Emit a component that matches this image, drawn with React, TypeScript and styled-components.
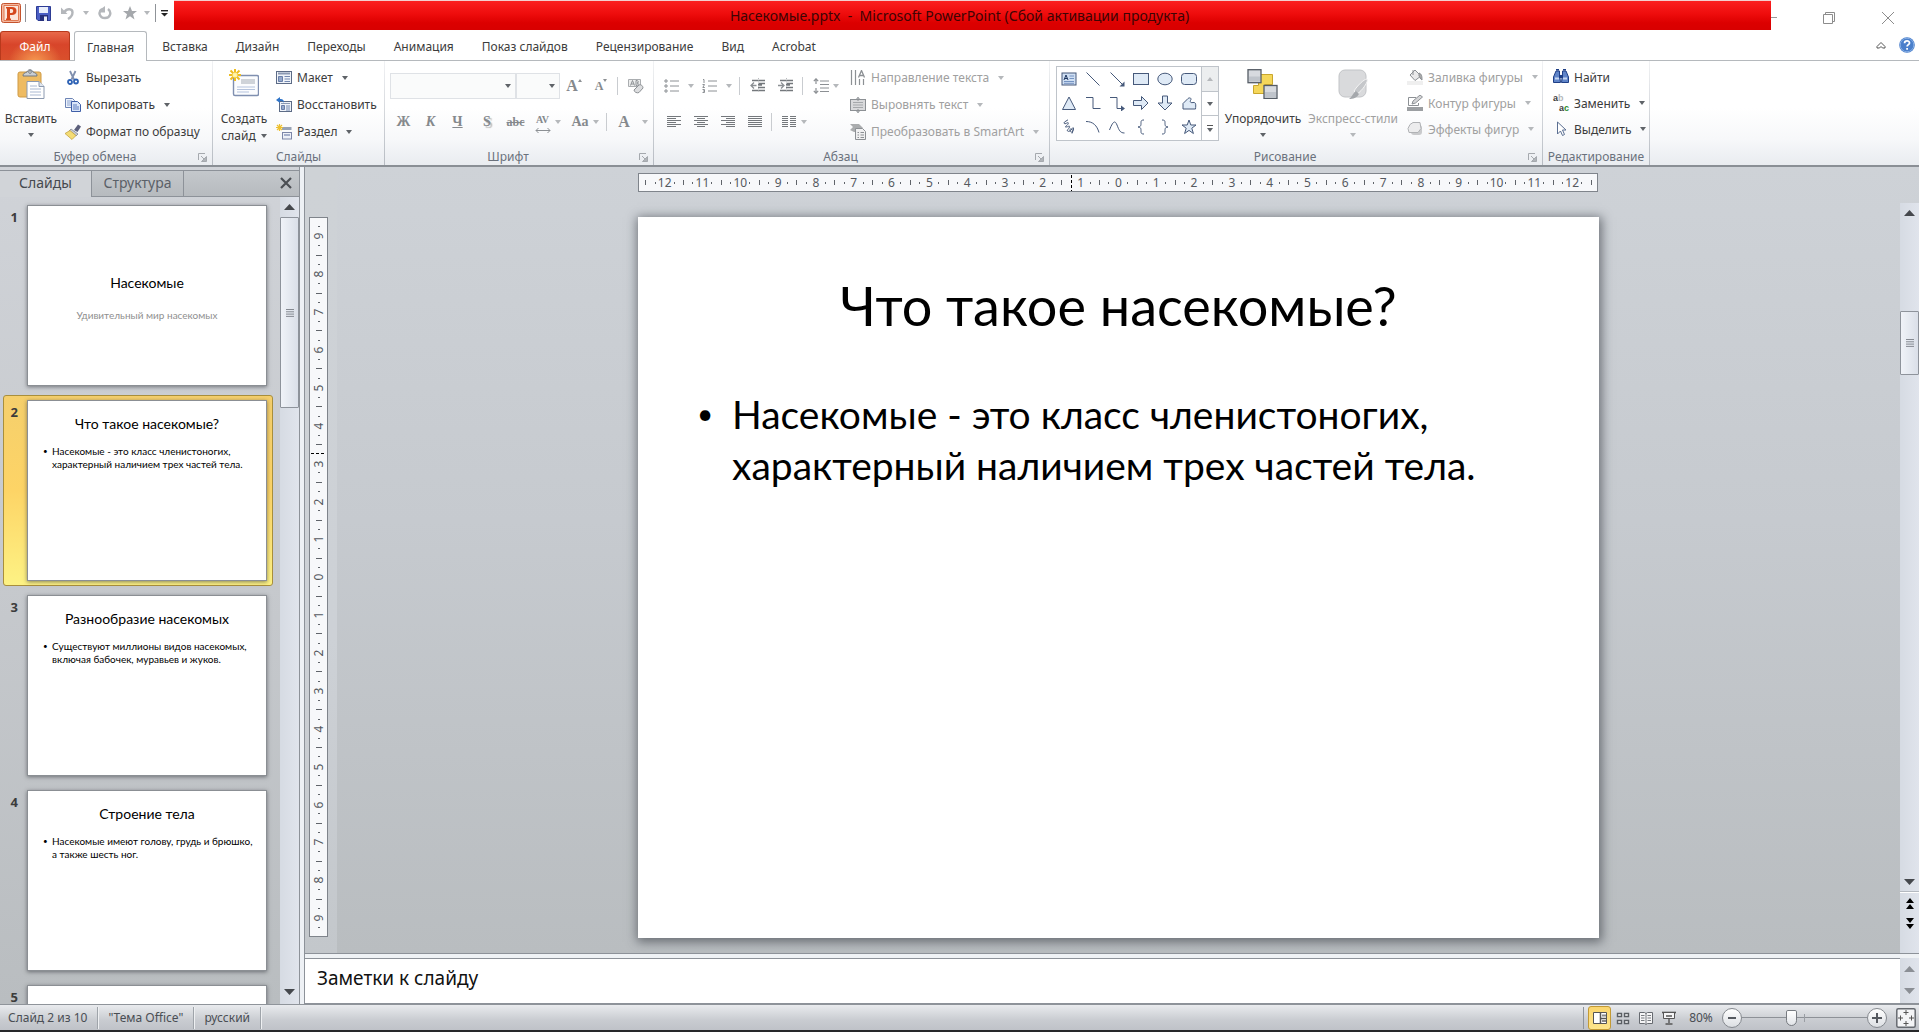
import React from 'react';
import styled, { createGlobalStyle, css } from 'styled-components';

const ui = `"Noto Sans", "Open Sans", sans-serif`;
const slideFont = `Lato, "Open Sans", sans-serif`;
const ink = '#3c3c3c';
const dim = '#a0a0a0';
const rule = '#8d9299';

const GlobalStyle = createGlobalStyle`
  *, *::before, *::after { box-sizing: border-box; }
  body { margin: 0; font-family: ${ui}; font-size: 12px; color: ${ink}; background: #fff; }
  button, select, textarea, input { font: inherit; color: inherit; margin: 0; }
  button { border: 0; padding: 0; background: none; white-space: nowrap; }
  ul, ol { list-style: none; margin: 0; padding: 0; }
  h1, h2, p { margin: 0; font-weight: 400; }
  svg { display: block; flex: none; }
`;

const Shell = styled.div`
  display: flex;
  flex-direction: column;
  height: 100vh;
  overflow: hidden;
  background: #e9ecef;
`;

/* ---------- title bar ---------- */
const TitleBar = styled.header`
  display: flex;
  align-items: stretch;
  height: 30px;
  background: #fff;
  flex: none;
`;
const QuickAccess = styled.div`
  display: flex;
  align-items: center;
  width: 174px;
  padding: 0 4px 4px 1px;
  flex: none;
`;
const QuickButton = styled.button<{ $w: number }>`
  display: flex;
  align-items: center;
  justify-content: center;
  width: ${p => p.$w}px;
  height: 22px;
`;
const Bar = styled.i<{ $h?: number; $m?: number; $c?: string }>`
  display: block;
  flex: none;
  width: 1px;
  height: ${p => p.$h ?? 18}px;
  margin: 0 ${p => p.$m ?? 3}px;
  background: ${p => p.$c ?? '#c9ccd0'};
`;
const RedTitle = styled.h1`
  flex: 1;
  display: flex;
  justify-content: center;
  align-items: center;
  padding-right: 26px;
  border-top: 1px solid #f3cfcf;
  background: linear-gradient(#fb2020, #ee0c0c 45%, #dc0000 75%, #d80000);
  color: #3c0404;
  font-size: 14px;
  line-height: 20px;
  white-space: pre;
`;
const WindowButtons = styled.div`
  display: flex;
  width: 148px;
  flex: none;
  padding-top: 6px;
`;
const WindowButton = styled.button<{ $w: number }>`
  width: ${p => p.$w}px;
  height: 24px;
  display: flex;
  align-items: center;
  justify-content: center;
`;

/* ---------- ribbon tabs ---------- */
const TabRow = styled.nav`
  display: flex;
  align-items: stretch;
  height: 31px;
  flex: none;
  background: #fff;
  border-bottom: 1px solid #b5b9bd;
`;
const FileTab = styled.button`
  width: 70px;
  margin: 1px 4px 0 0;
  border: 1px solid #b8391c;
  border-bottom: 0;
  border-radius: 3px 3px 0 0;
  color: #fff;
  background: radial-gradient(ellipse at 50% 110%, #f79b52 0, rgba(247, 155, 82, 0) 55%), linear-gradient(#e8694a, #d8452a 45%, #d9502c);
`;
const RibbonTab = styled.button<{ $active?: boolean }>`
  padding: 2px 14px 0;
  margin-top: 1px;
  ${p => p.$active && css`
    padding: 1px 12px 0;
    margin-right: 1px;
    margin-bottom: -1px;
    background: #fff;
    border: 1px solid #b5b9bd;
    border-bottom: 0;
    border-radius: 3px 3px 0 0;
  `}
`;
const TabTools = styled.div`
  display: flex;
  align-items: center;
  gap: 13px;
  margin-left: auto;
  padding-right: 4px;
`;

/* ---------- ribbon ---------- */
const Ribbon = styled.section`
  display: flex;
  flex: none;
  height: 106px;
  background: linear-gradient(#fff 45%, #f7f8fa 75%, #e9ecf0);
  border-bottom: 2px solid #8a8f95;
`;
const Group = styled.section<{ $w: number }>`
  width: ${p => p.$w}px;
  flex: none;
  display: flex;
  flex-direction: column;
  padding-top: 3px;
  border-right: 1px solid;
  border-image: linear-gradient(#f2f3f5, #b6bbc2) 1;
`;
const GroupBody = styled.div<{ $pad: number }>`
  display: flex;
  height: 81px;
  padding-left: ${p => p.$pad}px;
`;
const GroupFooter = styled.div`
  display: flex;
  align-items: center;
  flex: 1;
  padding-top: 4px;
  color: #6a717c;
`;
const GroupName = styled.h2`
  flex: 1;
  text-align: center;
  font-size: 12px;
  line-height: 16px;
`;
const LauncherButton = styled.button`
  margin: 0 5px 0 8px;
`;
const BigButton = styled.button<{ $w: number; $off?: boolean }>`
  width: ${p => p.$w}px;
  display: flex;
  flex-direction: column;
  align-items: center;
  padding-top: 5px;
  line-height: 17px;
  color: ${p => (p.$off ? dim : ink)};
`;
const BigIcon = styled.span`
  height: 41px;
`;
const BigLabel = styled.span`
  display: flex;
  align-items: center;
  gap: 5px;
  min-height: 15px;
`;
const Stack = styled.div<{ $ml?: number }>`
  display: flex;
  flex-direction: column;
  margin-left: ${p => p.$ml ?? 0}px;
`;
const RowButton = styled.button<{ $off?: boolean; $tight?: boolean }>`
  display: flex;
  align-items: center;
  height: ${p => (p.$tight ? 26 : 27)}px;
  gap: 5px;
  color: ${p => (p.$off ? dim : ink)};
`;
const CaretSlot = styled.span`
  margin-left: 4px;
`;
const ToolRows = styled.div`
  display: flex;
  flex-direction: column;
  padding-top: 9px;
  gap: 10px;
`;
const ToolRow = styled.div`
  display: flex;
  align-items: center;
  height: 26px;
`;
const ToolButton = styled.button<{ $w: number; $gap?: number }>`
  width: ${p => p.$w}px;
  height: 24px;
  display: flex;
  align-items: center;
  justify-content: center;
  gap: ${p => p.$gap ?? 4}px;
  color: #85898d;
`;
const Letter = styled.span<{ $size?: number; $italic?: boolean; $under?: boolean; $strike?: boolean; $shadow?: boolean }>`
  font-family: "Liberation Serif", serif;
  font-weight: 700;
  font-size: ${p => p.$size ?? 14}px;
  line-height: 16px;
  font-style: ${p => (p.$italic ? 'italic' : 'normal')};
  text-decoration: ${p => (p.$under ? 'underline' : p.$strike ? 'line-through' : 'none')};
  text-shadow: ${p => (p.$shadow ? '2px 2px 1px #bbb' : 'none')};
`;
const ComboBox = styled.span<{ $w: number }>`
  position: relative;
  display: flex;
  width: ${p => p.$w}px;
  height: 26px;
  svg { position: absolute; right: 5px; top: 11px; pointer-events: none; }
`;
const ComboSelect = styled.select`
  appearance: none;
  width: 100%;
  border: 1px solid #dfe2e6;
  border-radius: 0;
  background: #fafbfb;
`;
const Gallery = styled.div`
  display: flex;
  height: 75px;
  margin-top: 2px;
  border: 1px solid #bfc4ca;
  background: #fff;
`;
const ShapeGrid = styled.div`
  display: grid;
  grid-template-columns: repeat(6, 24px);
  grid-template-rows: repeat(3, 24px);
`;
const ShapeButton = styled.button`
  display: flex;
  align-items: center;
  justify-content: center;
`;
const GalleryScroll = styled.div`
  display: flex;
  flex-direction: column;
  width: 17px;
  border-left: 1px solid #bfc4ca;
`;
const GalleryArrow = styled.button<{ $off?: boolean }>`
  flex: 1;
  display: flex;
  flex-direction: column;
  align-items: center;
  justify-content: center;
  gap: 2px;
  background: ${p => (p.$off ? '#eceeef' : '#fff')};
  & + & { border-top: 1px solid #bfc4ca; }
`;

/* ---------- workspace ---------- */
const Workspace = styled.div`
  display: flex;
  flex: 1;
  min-height: 0;
`;
const Sidebar = styled.aside`
  width: 300px;
  flex: none;
  display: flex;
  flex-direction: column;
  padding-top: 3px;
  background: linear-gradient(#d0d3d8, #c6c9cd 50%, #b9bdc0);
  border-right: 1px solid ${rule};
`;
const PaneTabs = styled.div`
  display: flex;
  height: 27px;
  flex: none;
  border-top: 1px solid ${rule};
  background: linear-gradient(#c4c8cc, #b6babe);
`;
const PaneTab = styled.button<{ $w: number; $active?: boolean }>`
  width: ${p => p.$w}px;
  padding-bottom: ${p => (p.$active ? 3 : 2)}px;
  font-size: 14px;
  color: ${p => (p.$active ? '#45494e' : '#5b6068')};
  border-right: 1px solid ${rule};
  border-bottom: ${p => (p.$active ? 0 : 1)}px solid ${rule};
  background: ${p => (p.$active ? '#d1d4d8' : 'none')};
`;
const PaneClose = styled.button`
  flex: 1;
  display: flex;
  justify-content: flex-end;
  align-items: center;
  padding: 0 7px 2px 0;
  border-bottom: 1px solid ${rule};
`;
const ThumbArea = styled.div`
  display: flex;
  flex: 1;
  min-height: 0;
`;
const ThumbList = styled.ol`
  flex: 1;
  display: flex;
  flex-direction: column;
  gap: 4px;
  padding: 3px 0 0 3px;
  overflow: hidden;
`;
const ThumbItem = styled.button<{ $selected?: boolean }>`
  display: flex;
  width: 270px;
  padding: 4px 5px 4px 0;
  border: 1px solid ${p => (p.$selected ? '#a98f3c' : 'transparent')};
  border-radius: 3px;
  background: ${p => (p.$selected ? 'linear-gradient(#f5cf6c, #fdd466 50%, #fdf284)' : 'none')};
  white-space: normal;
`;
const ThumbNumber = styled.span`
  width: 23px;
  flex: none;
  padding: 4px 9px 0 0;
  text-align: right;
  font-size: 13px;
  line-height: 16px;
  font-weight: 700;
`;
const ThumbSlide = styled.span<{ $cover?: boolean }>`
  display: block;
  flex: 1;
  height: 181px;
  padding-top: ${p => (p.$cover ? 69 : 15)}px;
  border: 1px solid #8b8f94;
  background: #fff;
  box-shadow: 0 1px 4px rgba(40, 44, 50, 0.55);
  color: #000;
  font-family: ${slideFont};
  text-align: center;
`;
const ThumbTitle = styled.span`
  display: block;
  font-size: 14px;
  line-height: 16px;
`;
const ThumbSubtitle = styled.span`
  display: block;
  margin-top: 18px;
  font-size: 10px;
  line-height: 13px;
  color: #8f8f8f;
`;
const ThumbBody = styled.span`
  display: flex;
  margin: 13px 0 0 15px;
  font-size: 10px;
  line-height: 13px;
  text-align: left;
  white-space: pre;
`;
const ThumbBullet = styled.span`
  width: 9px;
  font-size: 8px;
  line-height: 12px;
`;
const Scroll = styled.div<{ $top?: number }>`
  display: flex;
  flex-direction: column;
  align-items: center;
  width: 19px;
  margin-top: ${p => p.$top ?? 0}px;
  flex: none;
  background: linear-gradient(90deg, #d6dbe3, #e0e4ec);
`;
const ScrollArrow = styled.button<{ $h?: number }>`
  width: 100%;
  height: ${p => p.$h ?? 20}px;
  flex: none;
  display: flex;
  align-items: center;
  justify-content: center;
`;
const ScrollThumb = styled.div<{ $before: number; $len: number }>`
  width: 100%;
  height: ${p => p.$len}px;
  margin-top: ${p => p.$before}px;
  flex: none;
  display: flex;
  align-items: center;
  justify-content: center;
  border: 1px solid #8e939b;
  border-radius: 1px;
  background: linear-gradient(90deg, #f0f3f8, #dadfe8);
`;
const SlideStep = styled.div`
  width: 100%;
  height: 61px;
  flex: none;
  border-top: 1px solid #fff;
  box-shadow: 0 -1px 0 #b4b9c0;
`;
const Spacer = styled.div`
  flex: 1;
`;
const Main = styled.main`
  flex: 1;
  min-width: 0;
  display: flex;
  flex-direction: column;
  border-left: 4px solid #eef1f5;
`;
const Stage = styled.section`
  flex: 1;
  min-height: 0;
  display: flex;
  border-left: 1px solid ${rule};
  background: linear-gradient(#ced2d7, #c6cacf 45%, #b9bdc0);
  overflow: hidden;
`;
const RulerGutter = styled.div`
  width: 32px;
  flex: none;
  padding: 50px 0 0 4px;
  background: linear-gradient(#ced2d6, #cdd1d6 60%, #c3c7cb);
`;
const Canvas = styled.div`
  flex: 1;
  display: flex;
  justify-content: center;
  padding-top: 6px;
`;
const Sheet = styled.div`
  display: flex;
  flex-direction: column;
`;
const HRuler = styled.div`
  display: flex;
  width: 960px;
  height: 19px;
  padding: 0 2px;
  border: 1px solid #7f848b;
  background: #f7f8fa;
  color: #55595f;
  font-size: 12px;
`;
const VRuler = styled.div`
  display: flex;
  flex-direction: column;
  width: 19px;
  height: 720px;
  padding: 4px 0;
  border: 1px solid #7f848b;
  background: #f7f8fa;
  color: #55595f;
  font-size: 12px;
`;
const Notch = styled.span<{ $v?: boolean }>`
  flex: 1 1 0;
  min-width: 0;
  min-height: 0;
  display: flex;
  align-items: center;
  justify-content: center;
  line-height: 14px;
  white-space: nowrap;
  ${p => p.$v && css`
    writing-mode: vertical-rl;
    transform: rotate(180deg);
  `}
`;
const Tick = styled.i<{ $w: number; $h: number }>`
  flex: none;
  width: ${p => p.$w}px;
  height: ${p => p.$h}px;
  background: #60646a;
`;
const CursorMark = styled.i<{ $v?: boolean }>`
  flex: none;
  width: ${p => (p.$v ? 15 : 1)}px;
  height: ${p => (p.$v ? 1 : 16)}px;
  background: repeating-linear-gradient(${p => (p.$v ? '90deg' : '180deg')}, #000 0 3px, transparent 3px 5px);
`;
const Slide = styled.article`
  width: 961px;
  height: 721px;
  margin-top: 25px;
  flex: none;
  background: #fff;
  color: #000;
  font-family: ${slideFont};
  box-shadow: 1px 2px 10px 2px rgba(60, 64, 72, 0.65);
`;
const SlideTitle = styled.h2`
  padding-top: 56px;
  text-align: center;
  font-size: 54px;
  line-height: 66px;
`;
const SlideBody = styled.ul`
  margin: 50px 0 0 59px;
  font-size: 39px;
  line-height: 51px;
`;
const SlideBullet = styled.li`
  display: flex;
  white-space: pre;
`;
const BulletMark = styled.span`
  width: 35px;
  flex: none;
  font-size: 28px;
  line-height: 48px;
`;
const NotesPane = styled.section`
  display: flex;
  height: 51px;
  flex: none;
  border-top: 1px solid ${rule};
  border-bottom: 1px solid ${rule};
  border-left: 1px solid ${rule};
  padding-top: 4px;
  background: #eff2f5;
`;
const NotesText = styled.textarea`
  flex: 1;
  border: 0;
  border-top: 1px solid ${rule};
  padding: 6px 12px;
  resize: none;
  overflow: hidden;
  font-size: 19px;
  line-height: 26px;
  color: #111;
  background: #fff;
`;

/* ---------- status bar ---------- */
const StatusBar = styled.footer`
  display: flex;
  align-items: center;
  height: 28px;
  flex: none;
  border-top: 1px solid #8f949a;
  border-bottom: 2px solid #26282a;
  background: linear-gradient(#e9ebee, #c9ccd1 60%, #bfc2c8);
  color: #4a4e54;
`;
const StatusCell = styled.button`
  height: 22px;
  padding: 0 10px;
  border-right: 1px solid #9fa4aa;
  box-shadow: 1px 0 0 #eef0f2;
  &:first-child { padding-left: 8px; }
`;
const ViewButton = styled.button<{ $active?: boolean }>`
  width: 23px;
  height: 24px;
  display: flex;
  align-items: center;
  justify-content: center;
  border: 1px solid ${p => (p.$active ? '#c39a35' : 'transparent')};
  border-radius: 3px;
  background: ${p => (p.$active ? 'linear-gradient(#fbd66e, #fde58c)' : 'none')};
`;
const ZoomValue = styled.button`
  width: 42px;
`;
const RoundButton = styled.button`
  width: 20px;
  height: 20px;
  display: flex;
  align-items: center;
  justify-content: center;
  border: 1px solid #85898f;
  border-radius: 50%;
  background: linear-gradient(#fff, #dcdfe3);
`;
const ZoomSlider = styled.input`
  appearance: none;
  width: 125px;
  height: 18px;
  background:
    linear-gradient(#9a9ea4, #9a9ea4) 50% 50% / 1px 8px no-repeat,
    linear-gradient(#8d9197, #8d9197) 50% 50% / 100% 1px no-repeat;
  &::-webkit-slider-thumb {
    appearance: none;
    width: 11px;
    height: 16px;
    border: 1px solid #777b81;
    border-radius: 2px 2px 6px 6px;
    background: linear-gradient(#fff, #e1e4e8);
  }
`;
const FitButton = styled.button`
  width: 20px;
  height: 20px;
  margin: 0 3px 0 9px;
  display: flex;
  align-items: center;
  justify-content: center;
`;

/* ---------- drawings ---------- */
const Caret = ({ c = '#5f6368', up = false, s = 6 }: { c?: string; up?: boolean; s?: number }) => (
  <svg width={s} height={4} viewBox="0 0 8 4" preserveAspectRatio="none" aria-hidden="true">
    <path d={up ? 'M0 4L4 0L8 4Z' : 'M0 0H8L4 4Z'} fill={c} />
  </svg>
);
const Arrow = ({ up = false, c = '#45484d' }: { up?: boolean; c?: string }) => (
  <svg width="11" height="6" viewBox="0 0 11 6" aria-hidden="true">
    <path d={up ? 'M0 6L5.5 0L11 6Z' : 'M0 0H11L5.5 6Z'} fill={c} />
  </svg>
);
const Grip = () => (
  <svg width="8" height="8" viewBox="0 0 8 8" stroke="#7a7f87" aria-hidden="true">
    <path d="M0 .5H8M0 2.8H8M0 5.1H8M0 7.4H8" strokeWidth=".9" />
  </svg>
);
const Svg = ({ s = 16, h, children }: { s?: number; h?: number; children: React.ReactNode }) => (
  <svg width={s} height={h ?? s} viewBox={`0 0 ${s} ${h ?? s}`} fill="none" aria-hidden="true">{children}</svg>
);
const Launcher = () => (
  <LauncherButton aria-label="Параметры группы">
    <Svg s={9}><path d="M.5 7V.5H7" stroke="#a5a9ae" /><path d="M3 3l3 3" stroke="#a5a9ae" /><path d="M8.5 3.5v5h-5z" fill="#b0b4b9" stroke="#a5a9ae" /></Svg>
  </LauncherButton>
);

const AppLogo = () => (
  <Svg s={20}>
    <rect x=".5" y=".5" width="19" height="19" rx="2" fill="#f3b7a0" stroke="#c4522c" />
    <path d="M3 2.500h14.500v15H3z" fill="#fbe6dc" stroke="#e07a52" />
    <path fillRule="evenodd" d="M5 4h6c3 0 4.500 1.500 4.500 4s-1.800 4-4.500 4H9v3.500h1V17H5v-1.500h1v-10H5zM9 6v4h1.400c1.200 0 1.800-.700 1.800-2s-.6-2-1.800-2z" fill="#d4481e" />
  </Svg>
);
const SaveIcon = () => (
  <Svg s={15}>
    <path d="M.5.5h14v14H2L.5 13z" fill="#4a5ec4" stroke="#2d3c94" />
    <path d="M3 1h9v6H3z" fill="#e9eefb" /><path d="M4 9h8v6H4z" fill="#26307c" /><path d="M8 10.500h3V15H8z" fill="#e8ebf7" />
  </Svg>
);
const UndoIcon = () => (
  <Svg s={14}><path d="M3.500 6C6 2 11.500 2.500 11.500 6.500 11.500 10 9.500 11.500 7 13" stroke="#b4b7bb" strokeWidth="2.400" /><path d="M0 1.500V8h6.500z" fill="#b4b7bb" /></Svg>
);
const RedoIcon = () => (
  <Svg s={14}><path d="M4 3C-.5 6 1.500 12 7 12s7-6 3-9" stroke="#b4b7bb" strokeWidth="2.400" /><path d="M7 0v6.500H1.500V4z" fill="#b4b7bb" /></Svg>
);
const StarIcon = () => (
  <Svg s={14}><path d="M7 0l2 5h5l-4 3.200L11.500 13.500 7 10.300 2.500 13.500 4 8.200 0 5h5z" fill="#a5a8ac" /></Svg>
);
const PasteIcon = () => (
  <Svg s={28} h={30}>
    <rect x="1" y="3" width="23" height="25" rx="2" fill="#eebb62" stroke="#cf9a45" />
    <path d="M6 7c0-3 2-3 4-4 1-3 5-3 6 0 2 1 4 1 4 4z" fill="#c9ced3" stroke="#72787f" />
    <circle cx="13" cy="3" r="1.300" fill="#fff" stroke="#72787f" />
    <path d="M10 12.500h12l5 5V29.500H10z" fill="#fff" stroke="#8c9ab0" />
    <path d="M22 12.500v5h5" fill="#dfe6f0" stroke="#8c9ab0" />
    <path d="M13 17h7M13 20h11M13 23h11M13 26h11" stroke="#a9b8d1" />
  </Svg>
);
const CutIcon = () => (
  <Svg><path d="M5 1l4 8.500M10.500 1l-4 8.500" stroke="#7f8fae" strokeWidth="1.800" /><circle cx="5" cy="12" r="2" stroke="#2e62b5" strokeWidth="1.800" /><circle cx="11" cy="11.500" r="2" stroke="#2e62b5" strokeWidth="1.800" /></Svg>
);
const CopyIcon = () => (
  <Svg><path d="M.5 1.500h7l2 2v7h-9z" fill="#eef3fb" stroke="#6d84b5" /><path d="M2 4h5M2 6h4M2 8h4" stroke="#8ba3d0" /><path d="M6.500 4.500h6l3 3v7h-9z" fill="#dbe6f8" stroke="#3f5fa8" /><path d="M8 8h4M8 10h6M8 12h6" stroke="#5c7dc0" /></Svg>
);
const BrushIcon = () => (
  <Svg><path d="M9 6l4-5.500 3 2L12.500 8z" fill="#5b5f7b" /><path d="M6 5l7 5-2 2-7-5z" fill="#c7cbd2" stroke="#767b86" strokeWidth=".7" /><path d="M5 6.500l6 5L7 15.500 0 9.500z" fill="#f4dc74" stroke="#bd9b35" strokeWidth=".7" /></Svg>
);
const NewSlideIcon = () => (
  <Svg s={30} h={28}>
    <rect x="4.500" y="6.500" width="25" height="20" rx="1.500" fill="#fbfcfe" stroke="#7f8fb0" strokeWidth="1.400" />
    <path d="M12 10h14v5H12z" fill="#cfd3d9" /><path d="M8 18h18M8 20.500h18M8 23h12" stroke="#b5c3dd" />
    <g stroke="#eebd22" strokeWidth="2"><path d="M6 0v12M0 6h12M1.500 1.500l9 9M10.500 1.500l-9 9" /><circle cx="6" cy="6" r="1.500" fill="#fff" stroke="#fff2a0" /></g>
  </Svg>
);
const LayoutIcon = () => (
  <Svg><rect x=".5" y="1.500" width="15" height="12" fill="#eff3f9" stroke="#5c6b86" /><path d="M2 3.500h12" stroke="#8b99b3" strokeWidth="2" /><path d="M2.500 6.500h4v5h-4z" fill="#94a8cc" stroke="#6a7fa8" /><path d="M8.500 6.500H14M8.500 9H14M8.500 11.500H14" stroke="#7388b0" /></Svg>
);
const ResetIcon = () => (
  <Svg><rect x="3.500" y="4.500" width="12" height="10" fill="#eff3f9" stroke="#5c6b86" /><path d="M5 6.500h9" stroke="#8b99b3" /><path d="M5.500 8.500h3v4h-3z" fill="#94a8cc" stroke="#6a7fa8" /><path d="M10 9h4M10 11h4M10 13h4" stroke="#7388b0" /><path d="M0 3l4-3v2c3 0 4 1 4 4-1-2-2-2-4-2v2z" fill="#2f74c8" /></Svg>
);
const SectionIcon = () => (
  <Svg><path d="M6 4.500h9.500" stroke="#98a3b5" strokeWidth="3" /><rect x="6.500" y="8.500" width="9" height="6.500" fill="#eef1f8" stroke="#7c86a8" /><path d="M8 11h6" stroke="#a6b0cc" strokeWidth="2" /><g stroke="#eec02e" strokeWidth="1.200"><path d="M3.500 0v7M0 3.500h7M1 1l5 5M6 1L1 6" /></g></Svg>
);
const g = '#8c9094';
const ClearIcon = () => (
  <Svg><path d="M.5 1.500h12v7H.5z" fill="#eceded" stroke="#aaadb0" /><path d="M2.500 7.500l2-5 2 5M3.200 6h2.600M8 2.500v5c3 0 3-2.500 1-2.500 2 0 2-2.500-1-2.500" stroke={g} /><path d="M6 12l5-5c2-1 4 1 4 3l-4 4.500c-2 1-5-.5-5-2.500z" fill="#dcdddf" stroke={g} /></Svg>
);
const BulletsIcon = () => <Svg><path d="M6 3h9M6 8h9M6 13h9" stroke={g} /><path d="M1 2h2v2H1zM1 7h2v2H1zM1 12h2v2H1z" stroke={g} /></Svg>;
const NumbersIcon = () => <Svg><path d="M6 3h9M6 8h9M6 13h9" stroke={g} /><path d="M1 1.500h1V5M.500 6.500h2L.8 9.500h2M.5 11.500h2v3h-2M1 13h1.500" stroke={g} /></Svg>;
const IndentIcon = ({ out }: { out?: boolean }) => (
  <Svg><path d="M2 2.500h13M8 5.500h7M8 7h4M8 9.500h7M2 12.500h13" stroke="#74787c" strokeWidth="1.300" /><path d="M8.500 0v15" stroke="#b9bcbf" strokeDasharray="1 1.500" /><path d={out ? 'M6.500 7.500H1.500M4 4.500L1 7.500l3 3' : 'M0 7.500h5M3 4.500l3 3-3 3'} stroke={g} strokeWidth="1.300" /></Svg>
);
const SpacingIcon = () => <Svg><path d="M7 3h9M7 6.500h9M7 10h9M7 13.500h9" stroke={g} /><path d="M3 1v5M3 10v5M.8 3.200L3 .8l2.200 2.400M.8 12.800L3 15.200l2.200-2.400" stroke={g} strokeWidth="1.200" /></Svg>;
const Align = ({ k }: { k: 'l' | 'c' | 'r' | 'j' }) => {
  const short = { l: 'M1 4.500h9M1 8.500h9M1 12.500h9', c: 'M4 4.500h8M4 8.500h8M4 12.500h8', r: 'M6 4.500h9M6 8.500h9M6 12.500h9', j: 'M1 4.500h14M1 8.500h14M1 12.500h14' }[k];
  return <Svg><path d={`M1 2.500h14M1 6.500h14M1 10.500h14 ${short}`} stroke="#74787c" /></Svg>;
};
const ColumnsIcon = () => <Svg><path d="M1 2.500h6M1 4.500h6M1 6.500h6M1 8.500h6M1 10.500h6M1 12.500h6M9 2.500h6M9 4.500h6M9 6.500h6M9 8.500h6M9 10.500h6M9 12.500h6" stroke="#74787c" /></Svg>;
const DirectionIcon = () => <Svg><path d="M1.500 0v15M5.500 0v15M9.500 9v6M13.500 9v6" stroke={g} strokeWidth="1.200" /><path d="M8.500 7.500L11.500.5l3 7M9.500 5.500h4" stroke={g} strokeWidth="1.300" /></Svg>;
const AlignTextIcon = () => <Svg><rect x=".5" y="2.500" width="15" height="11" fill="#d9dadc" stroke={g} /><path d="M3 5.500h10M3 8h10M3 10.500h10" stroke="#a5a8ab" /><path d="M8 0v4M8 12v4M6 2.500L8 .5l2 2M6 13.500l2 2 2-2" stroke={g} /></Svg>;
const SmartArtIcon = () => <Svg><path d="M0 0h9l4 4-3 4H4L0 6l3-3z" fill="#aaacae" /><path d="M5.500 4.500h7l3 3v8h-10z" fill="#f0f0f1" stroke={g} /><path d="M7.500 8.500h1.500M10.500 8.500H14M7.500 11h1.500M10.500 11H14M7.500 13.500h1.500M10.500 13.500H14" stroke={g} /></Svg>;
const ArrangeIcon = () => (
  <Svg s={32} h={30}><path d="M11.500 5.500h14v10h-8v9h-11v-8h5z" fill="#f5d75a" stroke="#c9a62c" /><rect x="1" y=".7" width="13" height="13" fill="#d7dadf" stroke="#555c66" strokeWidth="1.300" /><path d="M2 7.500h11v5H2z" fill="#bfc4cb" /><rect x="17" y="16.500" width="13" height="13" fill="#d7dadf" stroke="#555c66" strokeWidth="1.300" /><path d="M18 23h11v5.500H18z" fill="#bfc4cb" /></Svg>
);
const StylesIcon = () => (
  <Svg s={32} h={30}><rect x="2" y="1" width="27" height="27" rx="6" fill="#d9dadc" stroke="#c2c4c7" /><path d="M30 10c2 2-5 12-10 15l-3-3c3-5 10-12 13-12z" fill="#c5c7ca" stroke="#f4f4f4" /><path d="M19 22l3 3c-2 4-6 5-10 5 3-2 4-6 7-8z" fill="#a5a8ac" /></Svg>
);
const FillIcon = () => <Svg><path d="M3 6l5-5 6 6-6 4.500z" fill="#e9e9ea" stroke={g} /><path d="M6 1v5M12 4c3 1 3 4 3 7-2-1-2-3-3-4z" fill="#aaa" stroke={g} /><path d="M0 12h16v4H0z" fill="#efefef" /></Svg>;
const OutlineIcon = () => <Svg><path d="M9 2.500H1.500v8h10V8" stroke={g} /><path d="M5 9l1-3 7-6 2.500 2-7 6z" fill="#d4d5d7" stroke={g} /><path d="M0 12h16v4H0z" fill="#9c9fa2" /></Svg>;
const EffectsIcon = () => <Svg><rect x="4" y="4" width="11" height="10" rx="3" fill="#c9cacc" /><path d="M3 3.500l3-2h7l1 6-3 4H2l-1-4z" fill="#ececed" stroke="#b0b2b5" /></Svg>;
const FindIcon = () => (
  <Svg><path d="M3 2h3.500v3L7.500 13.500H.5V8zM13 2H9.500v3L8.500 13.500h7V8z" fill="#5f84c8" stroke="#1f3f86" /><path d="M6 6h4v3H6z" fill="#1f3f86" /><path d="M2 9.500h4M10 9.500h4" stroke="#c7d7f2" strokeWidth="2" /><path d="M3 .8h3M10 .8h3" stroke="#1f3f86" strokeWidth="1.600" /></Svg>
);
const ReplaceGlyph = styled.span`
  display: grid;
  width: 16px;
  font-family: "Liberation Sans", sans-serif;
  font-size: 9px;
  line-height: 10px;
  font-weight: 700;
  text-align: left;
  span:last-child { padding-left: 6px; }
  i { font-style: normal; color: #b5b8bc; }
  b { color: #2a8c2e; }
`;
const SelectIcon = () => <Svg><path d="M4.500 1v12l3-3 2 4.500 2-1-2-4.500h3.500z" fill="#fff" stroke="#5b6f92" /></Svg>;

const sh = '#46597a';
const fl = '#dfeaf6';
const shapes: [string, React.ReactNode][] = [
  ['Надпись', <><rect x="1" y="2" width="14" height="12" fill="#cfdff3" stroke={sh} /><path d="M3 9l2-5 2 5M3.700 7.500h2.600" stroke="#1d355f" /><path d="M8.500 5H13M8.500 7.500H13M3 10.500h10M3 12.300h10" stroke="#5d7fb5" strokeWidth=".8" /></>],
  ['Линия', <path d="M1.500 1.500l13 13" stroke={sh} />],
  ['Стрелка', <><path d="M1.500 1.500l12 12" stroke={sh} /><path d="M15.500 15.500v-5l-5 5z" fill={sh} /></>],
  ['Прямоугольник', <rect x=".5" y="2.500" width="15" height="11" fill={fl} stroke={sh} />],
  ['Овал', <ellipse cx="8" cy="8" rx="7.200" ry="5.800" fill={fl} stroke={sh} />],
  ['Скругленный прямоугольник', <rect x=".5" y="2.500" width="15" height="11" rx="3" fill={fl} stroke={sh} />],
  ['Треугольник', <path d="M8 2l6.500 12.500h-13z" fill={fl} stroke={sh} />],
  ['Соединитель', <path d="M1 2.500h7v11h7.500" stroke={sh} />],
  ['Соединитель со стрелкой', <><path d="M1 2.500h7v11h5" stroke={sh} /><path d="M12 10.500l4 3-4 3z" fill={sh} /></>],
  ['Стрелка вправо', <path d="M.5 5.500h8V1.500L15 8l-6.500 6.500v-4h-8z" fill={fl} stroke={sh} />],
  ['Стрелка вниз', <path d="M5.500 1h5v7h4.500l-7 7-7-7h4.500z" fill={fl} stroke={sh} />],
  ['Полилиния', <path d="M2 14V8.500L7 3.500c2-1.500 4 0 2.500 2-1 2 1 2.500 2.500 2 3-.5 3 2 2.500 6.500z" fill={fl} stroke={sh} />],
  ['Рисованная кривая', <path d="M7 .8L3.500 3c-1 1 0 2.500 1.500 1.500S8 3 7 5 3 8 5 8s4-2 3.500 0-3 3-2 4 3 0 4-1.500 2-3 2-.5-1.500 3.500-2.500 3-2-3 0-3 2 2.500 1 4.500" stroke={sh} />],
  ['Дуга', <path d="M1 2.500c7 0 11 4 13 11" stroke={sh} />],
  ['Кривая', <path d="M.5 11C4 2 6 1 8 6s3 8 7.500 8" stroke={sh} />],
  ['Левая скобка', <path d="M11 1C8 1 8 2 8 4s0 4-3 4c3 0 3 2 3 4s0 3 3 3" stroke={sh} />],
  ['Правая скобка', <path d="M5 1c3 0 3 1 3 3s0 4 3 4c-3 0-3 2-3 4s0 3-3 3" stroke={sh} />],
  ['Звезда', <path d="M8 1l1.800 5h5.200l-4.200 3.200 1.600 5.300L8 11.400l-4.400 3.100 1.600-5.300L1 6h5.200z" fill={fl} stroke={sh} />],
];

/* ---------- rulers ---------- */
const scale = (n: number) => Array.from({ length: n * 2 + 1 }, (_, i) => Math.abs(i - n));

const HorizontalRuler = () => (
  <HRuler>
    {scale(12).map((n, i) => (
      <React.Fragment key={i}>
        <Notch><Tick $w={1} $h={5} /></Notch>
        <Notch>{i === 11 ? <CursorMark /> : <Tick $w={1} $h={2} />}</Notch>
        <Notch>{n}</Notch>
        <Notch><Tick $w={1} $h={2} /></Notch>
      </React.Fragment>
    ))}
    <Notch><Tick $w={1} $h={5} /></Notch>
  </HRuler>
);
const VerticalRuler = () => (
  <VRuler>
    {scale(9).map((n, i) => (
      <React.Fragment key={i}>
        {i > 0 && <Notch><Tick $w={6} $h={1} /></Notch>}
        <Notch>{i === 6 ? <CursorMark $v /> : <Tick $w={2} $h={1} />}</Notch>
        <Notch $v>{n}</Notch>
        <Notch><Tick $w={2} $h={1} /></Notch>
      </React.Fragment>
    ))}
  </VRuler>
);

const Row = ({ icon, label, caret, off, tight }: { icon: React.ReactNode; label: string; caret?: boolean; off?: boolean; tight?: boolean }) => (
  <RowButton $off={off} $tight={tight}>
    {icon}
    {label}
    {caret && <CaretSlot><Caret c={off ? '#b5b8bb' : undefined} /></CaretSlot>}
  </RowButton>
);
const Footer = ({ name, launcher }: { name: string; launcher?: boolean }) => (
  <GroupFooter><GroupName>{name}</GroupName>{launcher && <Launcher />}</GroupFooter>
);

const tabs = ['Вставка', 'Дизайн', 'Переходы', 'Анимация', 'Показ слайдов', 'Рецензирование', 'Вид', 'Acrobat'];
const thumbs = [
  { title: 'Насекомые', sub: 'Удивительный мир насекомых' },
  { title: 'Что такое насекомые?', body: 'Насекомые - это класс членистоногих,\nхарактерный наличием трех частей тела.' },
  { title: 'Разнообразие насекомых', body: 'Существуют миллионы видов насекомых,\nвключая бабочек, муравьев и жуков.' },
  { title: 'Строение тела', body: 'Насекомые имеют голову, грудь и брюшко,\nа также шесть ног.' },
  { title: '' },
];
const off = '#b5b8bb';

export default function App() {
  return (
    <Shell>
      <GlobalStyle />
      <TitleBar>
        <QuickAccess>
          <AppLogo />
          <Bar $h={18} $m={4} $c="#8f9398" />
          <QuickButton $w={26} aria-label="Сохранить"><SaveIcon /></QuickButton>
          <QuickButton $w={24} aria-label="Отменить"><UndoIcon /></QuickButton>
          <QuickButton $w={12} aria-label="Список отмены"><Caret c={off} /></QuickButton>
          <QuickButton $w={26} aria-label="Повторить"><RedoIcon /></QuickButton>
          <QuickButton $w={24} aria-label="Избранное"><StarIcon /></QuickButton>
          <QuickButton $w={10} aria-label="Список избранного"><Caret c={off} /></QuickButton>
          <Bar $h={18} $m={3} $c="#8f9398" />
          <QuickButton $w={10} aria-label="Настройка панели">
            <Svg s={7} h={7}><path d="M0 .7h7" stroke="#222" strokeWidth="1.400" /><path d="M0 3h7L3.500 6.500z" fill="#222" /></Svg>
          </QuickButton>
        </QuickAccess>
        <RedTitle>{'Насекомые.pptx  -  Microsoft PowerPoint (Сбой активации продукта)'}</RedTitle>
        <WindowButtons>
          <WindowButton $w={29} aria-label="Свернуть"><Svg s={29} h={10}><path d="M0 4.500h6" stroke="#999" /></Svg></WindowButton>
          <WindowButton $w={58} aria-label="Восстановить"><Svg s={12}><path d="M.5 2.500h9v9h-9zM2.500 2.500v-2h9v9h-2" stroke="#8c8c8c" /></Svg></WindowButton>
          <WindowButton $w={60} aria-label="Закрыть"><Svg s={12}><path d="M0 0l12 12M12 0L0 12" stroke="#8c8c8c" /></Svg></WindowButton>
        </WindowButtons>
      </TitleBar>

      <TabRow>
        <FileTab>Файл</FileTab>
        <RibbonTab $active>Главная</RibbonTab>
        {tabs.map(t => <RibbonTab key={t}>{t}</RibbonTab>)}
        <TabTools>
          <button aria-label="Свернуть ленту"><Svg s={10} h={8}><path d="M1 5.500L5 1.500l4 4v1.500H6.500L5 5.500 3.500 7H1z" stroke="#555" /></Svg></button>
          <button aria-label="Справка"><Svg><circle cx="8" cy="8" r="7.800" fill="#4a7fcb" /><circle cx="8" cy="8" r="6.800" stroke="#86aee4" /><path d="M5.600 6.200c0-3 4.900-3 4.900-.3 0 1.800-2.400 1.700-2.400 3.700M8.100 11v1.700" stroke="#fff" strokeWidth="1.800" /></Svg></button>
        </TabTools>
      </TabRow>

      <Ribbon>
        <Group $w={213}>
          <GroupBody $pad={3}>
            <BigButton $w={56}><BigIcon><PasteIcon /></BigIcon><BigLabel>Вставить</BigLabel><BigLabel><Caret /></BigLabel></BigButton>
            <Stack $ml={6}>
              <Row icon={<CutIcon />} label="Вырезать" />
              <Row icon={<CopyIcon />} label="Копировать" caret />
              <Row icon={<BrushIcon />} label="Формат по образцу" />
            </Stack>
          </GroupBody>
          <Footer name="Буфер обмена" launcher />
        </Group>

        <Group $w={172}>
          <GroupBody $pad={3}>
            <BigButton $w={56}><BigIcon><NewSlideIcon /></BigIcon><BigLabel>Создать</BigLabel><BigLabel>слайд <Caret /></BigLabel></BigButton>
            <Stack $ml={4}>
              <Row icon={<LayoutIcon />} label="Макет" caret />
              <Row icon={<ResetIcon />} label="Восстановить" />
              <Row icon={<SectionIcon />} label="Раздел" caret />
            </Stack>
          </GroupBody>
          <Footer name="Слайды" />
        </Group>

        <Group $w={269}>
          <GroupBody $pad={5}>
            <ToolRows>
              <ToolRow>
                <ComboBox $w={126}><ComboSelect aria-label="Шрифт" /><Caret /></ComboBox>
                <ComboBox $w={44}><ComboSelect aria-label="Размер шрифта" /><Caret /></ComboBox>
                <ToolButton $w={28} $gap={0} aria-label="Увеличить шрифт"><Letter $size={16}>A</Letter><Svg s={4} h={14}><path d="M0 3l2-3 2 3z" fill={g} /></Svg></ToolButton>
                <ToolButton $w={26} $gap={0} aria-label="Уменьшить шрифт"><Letter $size={12}>A</Letter><Svg s={4} h={14}><path d="M0 0h4L2 3z" fill={g} /></Svg></ToolButton>
                <Bar $m={3} />
                <ToolButton $w={30} aria-label="Очистить формат"><ClearIcon /></ToolButton>
              </ToolRow>
              <ToolRow>
                <ToolButton $w={27}><Letter>Ж</Letter></ToolButton>
                <ToolButton $w={27}><Letter $italic>К</Letter></ToolButton>
                <ToolButton $w={27}><Letter $under>Ч</Letter></ToolButton>
                <ToolButton $w={32}><Letter $shadow>S</Letter></ToolButton>
                <ToolButton $w={25}><Letter $strike $size={12}>abc</Letter></ToolButton>
                <ToolButton $w={39}>
                  <Stack><Letter $size={10}>AV</Letter><Svg s={16} h={5}><path d="M1 2.500h14M3.500 0L1 2.500 3.500 5M12.500 0L15 2.500 12.500 5" stroke={g} /></Svg></Stack>
                  <Caret c={off} />
                </ToolButton>
                <ToolButton $w={36}><Letter>Aa</Letter><Caret c={off} /></ToolButton>
                <Bar $m={3} />
                <ToolButton $w={46} $gap={12}><Letter $size={16}>A</Letter><Caret c={off} /></ToolButton>
              </ToolRow>
            </ToolRows>
          </GroupBody>
          <Footer name="Шрифт" launcher />
        </Group>

        <Group $w={396}>
          <GroupBody $pad={6}>
            <ToolRows>
              <ToolRow>
                <ToolButton $w={38} $gap={8} aria-label="Маркеры"><BulletsIcon /><Caret c={off} /></ToolButton>
                <ToolButton $w={38} $gap={8} aria-label="Нумерация"><NumbersIcon /><Caret c={off} /></ToolButton>
                <Bar $m={3} />
                <ToolButton $w={30} aria-label="Уменьшить отступ"><IndentIcon out /></ToolButton>
                <ToolButton $w={26} aria-label="Увеличить отступ"><IndentIcon /></ToolButton>
                <Bar $m={3} />
                <ToolButton $w={40} aria-label="Междустрочный интервал"><SpacingIcon /><Caret c={off} /></ToolButton>
              </ToolRow>
              <ToolRow>
                <ToolButton $w={27} aria-label="По левому краю"><Align k="l" /></ToolButton>
                <ToolButton $w={27} aria-label="По центру"><Align k="c" /></ToolButton>
                <ToolButton $w={27} aria-label="По правому краю"><Align k="r" /></ToolButton>
                <ToolButton $w={27} aria-label="По ширине"><Align k="j" /></ToolButton>
                <Bar $m={3} />
                <ToolButton $w={38} aria-label="Колонки"><ColumnsIcon /><Caret c={off} /></ToolButton>
              </ToolRow>
            </ToolRows>
            <Stack $ml={4}>
              <Row off icon={<DirectionIcon />} label="Направление текста" caret />
              <Row off icon={<AlignTextIcon />} label="Выровнять текст" caret />
              <Row off icon={<SmartArtIcon />} label="Преобразовать в SmartArt" caret />
            </Stack>
          </GroupBody>
          <Footer name="Абзац" launcher />
        </Group>

        <Group $w={493}>
          <GroupBody $pad={6}>
            <Gallery>
              <ShapeGrid>
                {shapes.map(([name, art]) => <ShapeButton key={name} aria-label={name}><Svg>{art}</Svg></ShapeButton>)}
              </ShapeGrid>
              <GalleryScroll>
                <GalleryArrow $off aria-label="Вверх"><Caret up c={off} /></GalleryArrow>
                <GalleryArrow aria-label="Вниз"><Caret /></GalleryArrow>
                <GalleryArrow aria-label="Дополнительно"><Svg s={6} h={1}><path d="M0 .5h6" stroke="#555" /></Svg><Caret /></GalleryArrow>
              </GalleryScroll>
            </Gallery>
            <BigButton $w={88}><BigIcon><ArrangeIcon /></BigIcon><BigLabel>Упорядочить</BigLabel><BigLabel><Caret /></BigLabel></BigButton>
            <BigButton $w={92} $off><BigIcon><StylesIcon /></BigIcon><BigLabel>Экспресс-стили</BigLabel><BigLabel><Caret c={off} /></BigLabel></BigButton>
            <Stack $ml={8}>
              <Row off tight icon={<FillIcon />} label="Заливка фигуры" caret />
              <Row off tight icon={<OutlineIcon />} label="Контур фигуры" caret />
              <Row off tight icon={<EffectsIcon />} label="Эффекты фигур" caret />
            </Stack>
          </GroupBody>
          <Footer name="Рисование" launcher />
        </Group>

        <Group $w={107}>
          <GroupBody $pad={10}>
            <Stack>
              <Row tight icon={<FindIcon />} label="Найти" />
              <Row tight icon={<ReplaceGlyph aria-hidden="true"><span>a<i>b</i></span><span>a<b>c</b></span></ReplaceGlyph>} label="Заменить" caret />
              <Row tight icon={<SelectIcon />} label="Выделить" caret />
            </Stack>
          </GroupBody>
          <Footer name="Редактирование" />
        </Group>
      </Ribbon>

      <Workspace>
        <Sidebar>
          <PaneTabs>
            <PaneTab $w={92} $active>Слайды</PaneTab>
            <PaneTab $w={92}>Структура</PaneTab>
            <PaneClose aria-label="Закрыть область"><Svg s={12}><path d="M1 1l10 10M11 1L1 11" stroke="#4b4f54" strokeWidth="2.200" /></Svg></PaneClose>
          </PaneTabs>
          <ThumbArea>
            <ThumbList>
              {thumbs.map((t, i) => (
                <li key={i}>
                  <ThumbItem $selected={i === 1}>
                    <ThumbNumber>{i + 1}</ThumbNumber>
                    <ThumbSlide $cover={i === 0}>
                      <ThumbTitle>{t.title}</ThumbTitle>
                      {t.sub && <ThumbSubtitle>{t.sub}</ThumbSubtitle>}
                      {t.body && <ThumbBody><ThumbBullet>•</ThumbBullet><span>{t.body}</span></ThumbBody>}
                    </ThumbSlide>
                  </ThumbItem>
                </li>
              ))}
            </ThumbList>
            <Scroll>
              <ScrollArrow aria-label="Вверх"><Arrow up /></ScrollArrow>
              <ScrollThumb $before={0} $len={191}><Grip /></ScrollThumb>
              <Spacer />
              <ScrollArrow $h={24} aria-label="Вниз"><Arrow /></ScrollArrow>
            </Scroll>
          </ThumbArea>
        </Sidebar>

        <Main>
          <Stage>
            <RulerGutter><VerticalRuler /></RulerGutter>
            <Canvas>
              <Sheet>
                <HorizontalRuler />
                <Slide>
                  <SlideTitle>Что такое насекомые?</SlideTitle>
                  <SlideBody>
                    <SlideBullet>
                      <BulletMark>•</BulletMark>
                      <p>{'Насекомые - это класс членистоногих,\nхарактерный наличием трех частей тела.'}</p>
                    </SlideBullet>
                  </SlideBody>
                </Slide>
              </Sheet>
            </Canvas>
            <Scroll $top={36}>
              <ScrollArrow aria-label="Вверх"><Arrow up /></ScrollArrow>
              <ScrollThumb $before={88} $len={64}><Grip /></ScrollThumb>
              <Spacer />
              <ScrollArrow aria-label="Вниз"><Arrow /></ScrollArrow>
              <SlideStep>
                <ScrollArrow aria-label="Предыдущий слайд"><Svg s={8} h={11}><path d="M4 0l4 5H0zM4 6l4 5H0z" fill="#000" /></Svg></ScrollArrow>
                <ScrollArrow aria-label="Следующий слайд"><Svg s={8} h={11}><path d="M0 0h8L4 5zM0 6h8l-4 5z" fill="#000" /></Svg></ScrollArrow>
              </SlideStep>
            </Scroll>
          </Stage>
          <NotesPane>
            <NotesText aria-label="Заметки" defaultValue="Заметки к слайду" />
            <Scroll>
              <ScrollArrow $h={22} aria-label="Вверх"><Arrow up c="#8b8f95" /></ScrollArrow>
              <ScrollArrow $h={22} aria-label="Вниз"><Arrow c="#8b8f95" /></ScrollArrow>
            </Scroll>
          </NotesPane>
        </Main>
      </Workspace>

      <StatusBar>
        <StatusCell>Слайд 2 из 10</StatusCell>
        <StatusCell>"Тема Office"</StatusCell>
        <StatusCell>русский</StatusCell>
        <Spacer />
        <Bar $h={22} $m={4} $c="#8f949a" />
        <ViewButton $active aria-label="Обычный"><Svg><path d="M1.500 2.500h13v11h-13z" fill="#fff" stroke="#555" /><path d="M8.500 3v10M9 8.500h5" stroke="#555" strokeWidth="1.500" /><path d="M10 5.500h4M10 11h4" stroke="#888" strokeWidth="2" /></Svg></ViewButton>
        <ViewButton aria-label="Сортировщик"><Svg><path d="M2.500 3.500h4v3h-4zM9.500 3.500h4v3h-4zM2.500 10.500h4v3h-4zM9.500 10.500h4v3h-4z" fill="#fff" stroke="#5a5e63" strokeWidth="1.400" /></Svg></ViewButton>
        <ViewButton aria-label="Чтение"><Svg><path d="M1.500 2.500h5l1.500 1 1.500-1h5v11h-5l-1.500 1-1.500-1h-5z" fill="#f5f5f6" stroke="#666a70" /><path d="M8 3v11M3 5.500h3.500M3 8h3.500M3 10.500h3.500M9.500 5.500H13M9.500 8H13M9.500 10.500H13" stroke="#777b80" /></Svg></ViewButton>
        <ViewButton aria-label="Показ слайдов"><Svg><path d="M1 2.500h14" stroke="#555" strokeWidth="1.600" /><path d="M2.500 3v5.500h11V3" fill="#f5f5f6" stroke="#555" /><path d="M5 6h6M8 9v4M4.500 14h7" stroke="#555" strokeWidth="1.400" /></Svg></ViewButton>
        <ZoomValue>80%</ZoomValue>
        <RoundButton aria-label="Уменьшить"><Svg s={10}><path d="M1 5h8" stroke="#55595f" strokeWidth="2" /></Svg></RoundButton>
        <ZoomSlider type="range" min={0} max={100} defaultValue={39} aria-label="Масштаб" />
        <RoundButton aria-label="Увеличить"><Svg s={10}><path d="M0 5h10M5 0v10" stroke="#55595f" strokeWidth="2" /></Svg></RoundButton>
        <FitButton aria-label="Вписать слайд"><Svg s={20}><rect x=".8" y=".8" width="18.400" height="18.400" rx="1.500" fill="#f3f4f6" stroke="#666a70" strokeWidth="1.500" /><path d="M10 2v5M7.500 4.500h5M10 13v5M7.500 15.500h5M2 10h5M4.500 7.500v5M13 10h5M15.500 7.500v5" stroke="#555" /></Svg></FitButton>
      </StatusBar>
    </Shell>
  );
}
